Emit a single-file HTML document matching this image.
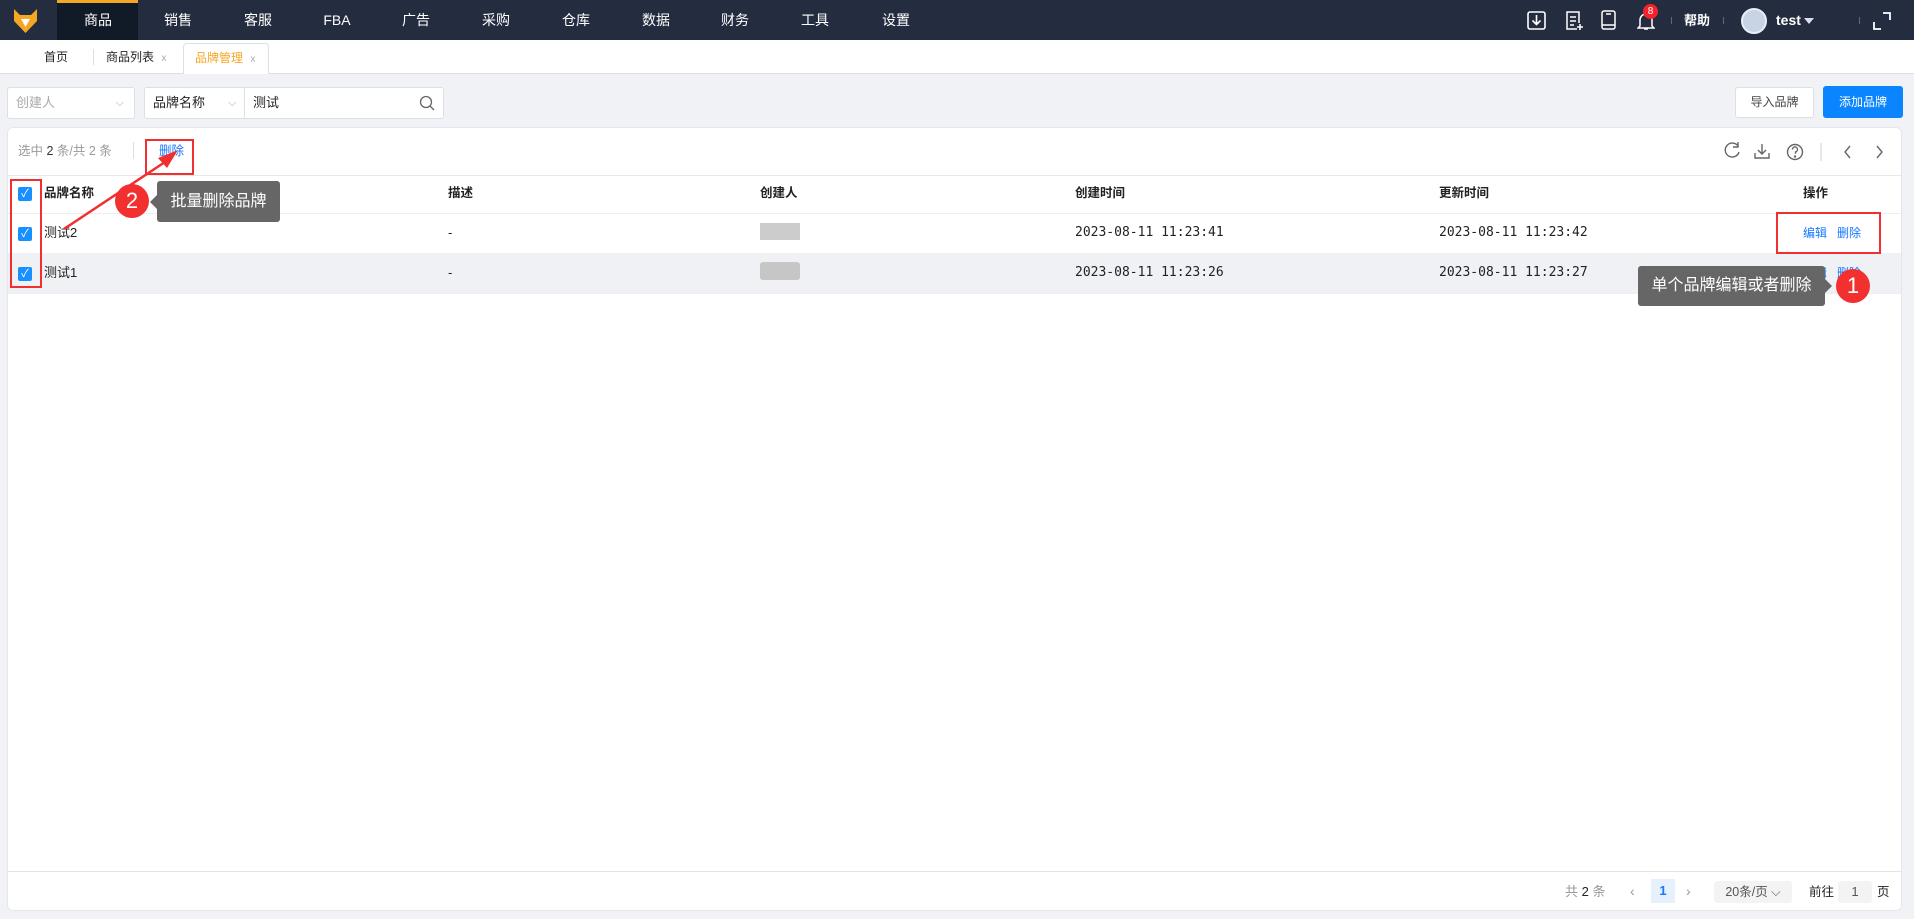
<!DOCTYPE html>
<html><head><meta charset="utf-8"><style>
*{box-sizing:border-box;margin:0;padding:0}
body{width:1914px;height:919px;background:#f0f2f5;font-family:"Liberation Sans","Noto Sans CJK SC",sans-serif;font-size:13px;color:#222;position:relative;overflow:hidden}
.abs{position:absolute;line-height:16px}
.nav{left:0;top:0;width:1914px;height:40px;background:#232d3f}
.ni{position:absolute;top:0;height:40px;width:80px;line-height:40px;text-align:center;color:#fff;font-size:14px}
.tabs{left:0;top:40px;width:1914px;height:34px;background:#fff;border-bottom:1px solid #dcdfe6}
.sel{background:#fff;border:1px solid #dcdfe6;border-radius:3px;height:32px;top:87px;line-height:30px;padding-left:8px;font-size:13px}
.card{left:7px;top:127px;width:1895px;height:784px;background:#fff;border:1px solid #e4e7ed;border-radius:6px}
.th{font-weight:bold;font-size:12.5px}
.cb{position:absolute;width:14px;height:14px;background:#1890ff;border-radius:2px;color:#fff;font-size:11px;line-height:14px;text-align:center}
.blue{color:#1677ff}
.mono{font-family:"DejaVu Sans Mono","Liberation Mono",monospace;font-size:13px}
.red{border:2px solid #f03030}
.tip{background:#666;color:#fff;border-radius:3px;font-size:16px;text-align:center}
.circ{background:#f23030;border-radius:50%;color:#fff;text-align:center;font-size:22px}
</style></head><body>
<div class="abs nav">
 <svg class="abs" style="left:12px;top:7px" width="27" height="27" viewBox="0 0 27 27"><path d="M2 2 L8 8 L19 8 L25 2 L25 14 L13.5 26 L2 14Z" fill="#f5a623"/><path d="M9 12 L13.5 20 L18 12Z" fill="#fff"/></svg>
 <div class="abs" style="left:57px;top:0;width:81px;height:40px;background:#111a27;border-top:3px solid #f5a623"></div>
 <div class="ni" style="left:58px">商品</div><div class="ni" style="left:138px">销售</div><div class="ni" style="left:218px">客服</div><div class="ni" style="left:297px">FBA</div><div class="ni" style="left:376px">广告</div><div class="ni" style="left:456px">采购</div><div class="ni" style="left:536px">仓库</div><div class="ni" style="left:616px">数据</div><div class="ni" style="left:695px">财务</div><div class="ni" style="left:775px">工具</div><div class="ni" style="left:856px">设置</div>
 <svg class="abs" style="left:1527px;top:11px" width="20" height="20"><rect x="1" y="1" width="17" height="17" rx="2" fill="none" stroke="#fff" stroke-width="1.6"/><path d="M9.5 4v9M5.5 9.5l4 4 4-4" fill="none" stroke="#fff" stroke-width="1.6"/></svg>
 <svg class="abs" style="left:1565px;top:11px" width="20" height="20"><path d="M14 12V1H2v17h10" fill="none" stroke="#fff" stroke-width="1.5"/><path d="M5 6h6M5 10h6M5 14h4M15 13v6M12 16h6" stroke="#fff" stroke-width="1.5"/></svg>
 <svg class="abs" style="left:1601px;top:10px" width="16" height="21"><rect x="1" y="1" width="13" height="18" rx="2" fill="none" stroke="#fff" stroke-width="1.5"/><path d="M1 15h13M5 4h5" stroke="#fff" stroke-width="1.5"/></svg>
 <svg class="abs" style="left:1637px;top:11px" width="18" height="20"><path d="M3 15V9a6 6 0 0 1 12 0v6l2 2H1z" fill="none" stroke="#fff" stroke-width="1.5"/><path d="M7 18h4" stroke="#fff" stroke-width="1.5"/></svg>
 <div class="abs" style="left:1643px;top:4px;width:15px;height:15px;border-radius:50%;background:#f5222d;color:#fff;font-size:10px;line-height:15px;text-align:center">8</div>
 <div class="abs" style="left:1671px;top:17px;width:1px;height:7px;background:#667"></div>
 <div class="abs" style="left:1684px;top:13px;color:#fff;font-size:13px;font-weight:bold">帮助</div>
 <div class="abs" style="left:1723px;top:17px;width:1px;height:7px;background:#667"></div>
 <div class="abs" style="left:1741px;top:8px;width:26px;height:26px;border-radius:50%;background:#c8d4e4;border:2px solid #e8eef6"></div>
 <div class="abs" style="left:1776px;top:12px;color:#fff;font-size:14px;font-weight:bold">test</div>
 <div class="abs" style="left:1804px;top:18px;width:0;height:0;border-left:5px solid transparent;border-right:5px solid transparent;border-top:6px solid #dde"></div>
 <div class="abs" style="left:1859px;top:17px;width:1px;height:7px;background:#667"></div>
 <svg class="abs" style="left:1873px;top:12px" width="18" height="18"><path d="M10 1h7v7M1 10v7h7" fill="none" stroke="#fff" stroke-width="1.8"/></svg>
</div>
<div class="abs tabs">
 <div class="abs" style="left:44px;top:9px;font-size:12px">首页</div>
 <div class="abs" style="left:93px;top:9px;width:1px;height:16px;background:#ddd"></div>
 <div class="abs" style="left:106px;top:9px;font-size:12px">商品列表 <span style="color:#aaa;font-size:10px;margin-left:4px">x</span></div>
 <div class="abs" style="left:183px;top:3px;width:86px;height:31px;border:1px solid #dcdfe6;border-bottom:none;border-radius:4px 4px 0 0;background:#fff;color:#f5a623;font-size:12px;padding:6px 0 0 11px">品牌管理 <span style="color:#aaa;font-size:10px;margin-left:4px">x</span></div>
</div>
<div class="abs sel" style="left:7px;width:128px;color:#aaa;line-height:30px">创建人<span class="abs" style="right:10px;top:7px;color:#aaa;font-size:11px">⌵</span></div>
<div class="abs sel" style="left:144px;width:300px;line-height:30px">品牌名称<span class="abs" style="left:83px;top:7px;color:#aaa;font-size:11px">⌵</span><div class="abs" style="left:99px;top:0;height:30px;line-height:30px;border-left:1px solid #dcdfe6;padding-left:8px">测试</div>
 <svg class="abs" style="right:8px;top:7px" width="16" height="17"><circle cx="7" cy="7" r="5.5" fill="none" stroke="#666" stroke-width="1.3"/><path d="M11 11l4 4" stroke="#666" stroke-width="1.3"/></svg></div>
<div class="abs" style="left:1735px;top:87px;width:79px;height:31px;background:#fff;border:1px solid #dcdfe6;border-radius:3px;text-align:center;line-height:29px;font-size:12px;color:#444">导入品牌</div>
<div class="abs" style="left:1823px;top:86px;width:80px;height:32px;background:#0a84ff;border-radius:3px;text-align:center;line-height:32px;font-size:12px;color:#fff">添加品牌</div>
<div class="abs card"></div>
<div class="abs" style="left:18px;top:143px;color:#999;font-size:12.5px">选中 <span style="color:#333">2</span> 条/共 2 条</div>
<div class="abs" style="left:133px;top:142px;width:1px;height:17px;background:#ddd"></div>
<div class="abs blue" style="left:159px;top:143px;font-size:12.5px">删除</div>
<svg class="abs" style="left:1720px;top:141px" width="180" height="22" fill="none" stroke="#666" stroke-width="1.4"><path d="M18 5a7 7 0 1 0 1 6"/><path d="M18 1v5h-5"/><path d="M42 3v10M38 9l4 4 4-4M35 12v5h14v-5"/><circle cx="75" cy="11" r="7.5"/><path d="M72.5 8.5a2.5 2.5 0 1 1 3 2.4v1.8" /><circle cx="75" cy="15.5" r=".5"/><path d="M101 2v18" stroke="#ddd"/><path d="M130 5l-5 6 5 6M157 5l5 6-5 6"/></svg>
<div class="abs" style="left:8px;top:175px;width:1893px;height:1px;background:#e8e8e8"></div>
<div class="abs" style="left:8px;top:213px;width:1893px;height:1px;background:#eee"></div>
<div class="abs" style="left:8px;top:253px;width:1893px;height:40px;background:#f0f1f4"></div>
<div class="abs" style="left:8px;top:293px;width:1893px;height:1px;background:#eee"></div>
<div class="cb" style="left:18px;top:187px">✓</div><div class="cb" style="left:18px;top:227px">✓</div><div class="cb" style="left:18px;top:267px">✓</div>
<div class="abs th" style="left:44px;top:185px">品牌名称</div>
<div class="abs th" style="left:448px;top:185px">描述</div>
<div class="abs th" style="left:760px;top:185px">创建人</div>
<div class="abs th" style="left:1075px;top:185px">创建时间</div>
<div class="abs th" style="left:1439px;top:185px">更新时间</div>
<div class="abs th" style="left:1803px;top:185px">操作</div>
<div class="abs" style="left:44px;top:225px">测试2</div><div class="abs" style="left:448px;top:225px">-</div>
<div class="abs" style="left:760px;top:223px;width:40px;height:17px;background:#ccc"></div>
<div class="abs mono" style="left:1075px;top:225px">2023-08-11 11:23:41</div><div class="abs mono" style="left:1439px;top:225px">2023-08-11 11:23:42</div>
<div class="abs blue" style="left:1803px;top:225px;font-size:12px">编辑&nbsp;&nbsp;&nbsp;删除</div>
<div class="abs" style="left:44px;top:265px">测试1</div><div class="abs" style="left:448px;top:265px">-</div>
<div class="abs" style="left:760px;top:262px;width:40px;height:18px;background:#c6c6c6;border-radius:3px"></div>
<div class="abs mono" style="left:1075px;top:265px">2023-08-11 11:23:26</div><div class="abs mono" style="left:1439px;top:265px">2023-08-11 11:23:27</div>
<div class="abs blue" style="left:1803px;top:265px;font-size:12px">编辑&nbsp;&nbsp;&nbsp;删除</div>
<div class="abs" style="left:8px;top:871px;width:1893px;height:1px;background:#e4e4e4"></div>
<div class="abs" style="left:1565px;top:884px;color:#999;font-size:13px">共 <span style="color:#222">2</span> 条</div>
<div class="abs" style="left:1630px;top:883px;color:#999;font-size:14px">‹</div>
<div class="abs" style="left:1651px;top:879px;width:24px;height:24px;background:#e6f1fd;color:#1677ff;text-align:center;line-height:24px;font-weight:bold">1</div>
<div class="abs" style="left:1686px;top:883px;color:#999;font-size:14px">›</div>
<div class="abs" style="left:1714px;top:881px;width:78px;height:22px;background:#f3f3f3;border-radius:3px;text-align:center;line-height:22px;color:#555;font-size:12.5px">20条/页 ⌵</div>
<div class="abs" style="left:1809px;top:884px;font-size:12.5px">前往</div>
<div class="abs" style="left:1838px;top:881px;width:34px;height:22px;background:#f3f3f3;border-radius:3px;text-align:center;line-height:22px;color:#555">1</div>
<div class="abs" style="left:1877px;top:884px;font-size:12.5px">页</div>
<div class="abs red" style="left:10px;top:179px;width:32px;height:109px"></div>
<div class="abs red" style="left:145px;top:139px;width:49px;height:36px"></div>
<svg class="abs" style="left:0;top:0" width="300" height="300"><path d="M64 229 L168 160" stroke="#f03030" stroke-width="2.5"/><path d="M178 150 L158 158 L167 168Z" fill="#f03030"/></svg>
<div class="abs circ" style="left:115px;top:184px;width:34px;height:34px;line-height:34px">2</div>
<div class="abs tip" style="left:157px;top:181px;width:123px;height:41px;line-height:41px">批量删除品牌</div>
<div class="abs" style="left:150px;top:195px;border-top:7px solid transparent;border-bottom:7px solid transparent;border-right:7px solid #666"></div>
<div class="abs red" style="left:1776px;top:212px;width:105px;height:42px"></div>
<div class="abs tip" style="left:1638px;top:266px;width:187px;height:40px;line-height:40px">单个品牌编辑或者删除</div>
<div class="abs" style="left:1825px;top:279px;border-top:7px solid transparent;border-bottom:7px solid transparent;border-left:7px solid #666"></div>
<div class="abs circ" style="left:1836px;top:269px;width:34px;height:34px;line-height:34px">1</div>
</body></html>
